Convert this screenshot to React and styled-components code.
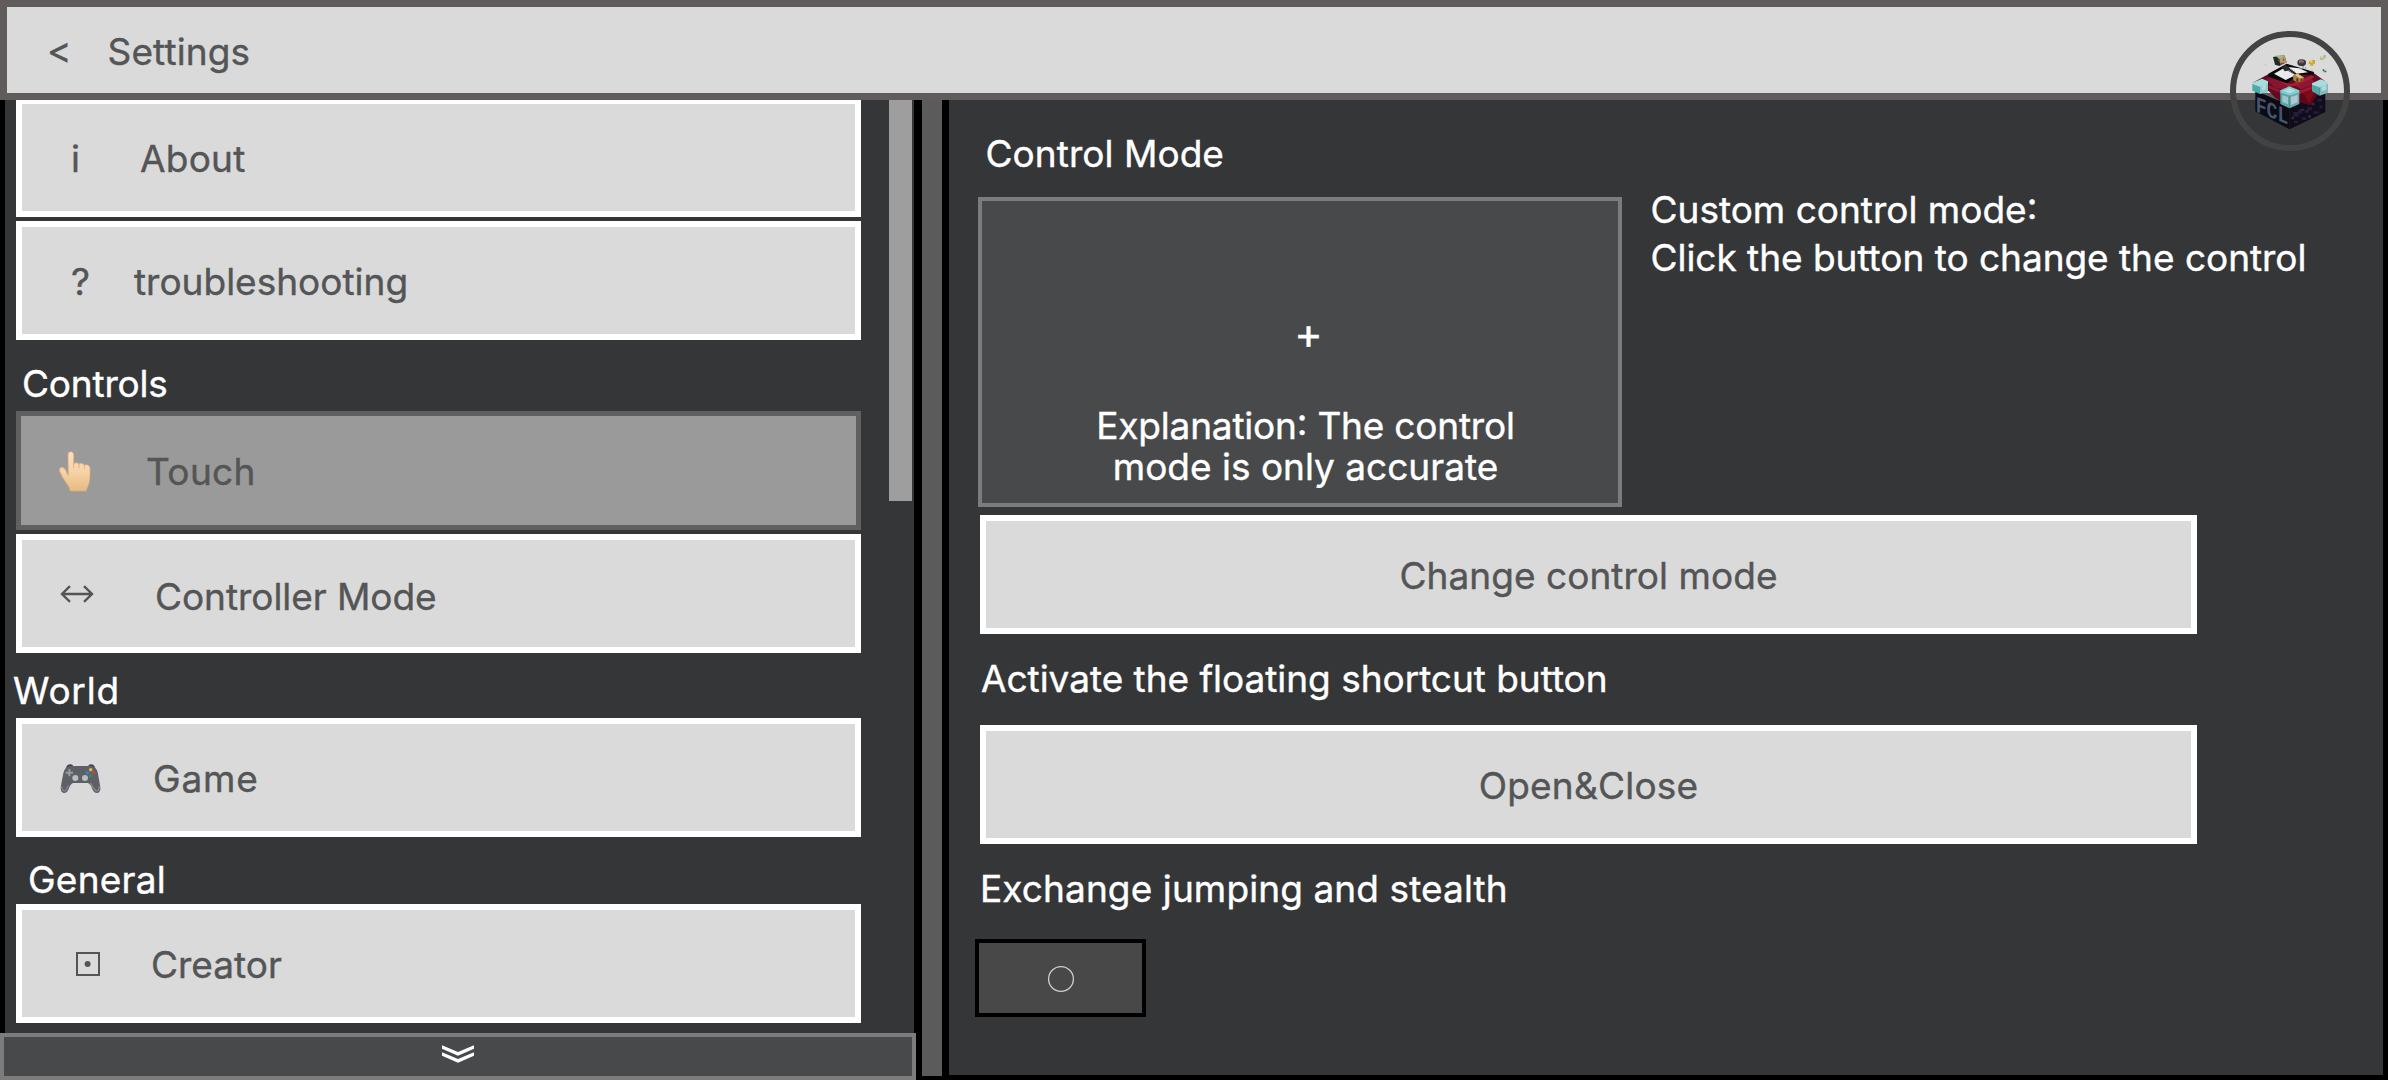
import React from "react";
import styled, { createGlobalStyle } from "styled-components";

const GlobalStyle = createGlobalStyle`
  *, *::before, *::after { box-sizing: border-box; }
  html, body { margin: 0; padding: 0; background: #000; }
  body { overflow: hidden; }
  svg { display: block; flex: none; }
`;

const Screen = styled.div`
  position: relative;
  display: flex;
  flex-direction: column;
  width: 2388px;
  height: 1080px;
  overflow: hidden;
  background: #000;
  color: #fff;
  font-family: Inter, "Liberation Sans", sans-serif;
  font-size: 37px;
  line-height: 45px;
  white-space: nowrap;
  -webkit-text-stroke: 0.4px currentColor;
`;

const Header = styled.header`
  display: flex;
  align-items: flex-start;
  flex: none;
  height: 100px;
  padding: 22px 0 0 40px;
  border: 7px solid #605c5b;
  background: #dadada;
  color: #545556;
`;

const BackButton = styled.span`
  width: 60.5px;
  margin-top: -2px;
`;

const Title = styled.span`
  letter-spacing: ${(p) => p.$tracking || 0}px;
`;

const Body = styled.main`
  display: flex;
  flex: 1;
  min-height: 0;
`;

const Sidebar = styled.aside`
  display: flex;
  flex-direction: column;
  width: 916px;
`;

const SidebarView = styled.div`
  display: flex;
  justify-content: space-between;
  width: 909px;
  height: 933px;
  margin-left: 5px;
  padding: 0 2px 0 11px;
  overflow: hidden;
  background: #353638;
`;

const NavList = styled.nav`
  width: 845px;
  margin-top: -2px;
`;

const ScrollThumb = styled.div`
  width: 23px;
  height: 401px;
  background: #9e9e9e;
`;

const NavItem = styled.div`
  display: flex;
  align-items: flex-start;
  height: 119px;
  margin-bottom: 4px;
  padding-top: ${(p) => (p.$active ? 33 : 32) + (p.$drop || 0)}px;
  padding-left: ${(p) => (p.$active ? 1 : 0)}px;
  border: ${(p) => (p.$active ? "5px solid #606060" : "6px solid #fff")};
  background: ${(p) => (p.$active ? "#9a9a9a" : "#dadada")};
  color: #545556;
`;

const IconSlot = styled.span`
  flex: none;
  width: ${(p) => p.$width}px;
  height: 45px;
  padding-left: ${(p) => p.$inset}px;
  padding-top: ${(p) => p.$drop || 0}px;
`;

const NavHeading = styled.h2`
  height: 45px;
  margin: ${(p) => p.$before}px 0 ${(p) => p.$after}px ${(p) => p.$indent}px;
  font: inherit;
  letter-spacing: ${(p) => p.$tracking || 0}px;
`;

const MoreBar = styled.div`
  display: flex;
  justify-content: center;
  height: 47px;
  padding-top: 8px;
  border: 4px solid #7c7c7c;
  background: #48494a;
`;

const Divider = styled.div`
  width: 33px;
  height: 976px;
  border: solid #000;
  border-width: 0 7px 0 6px;
  background: #5b5b5b;
`;

const Content = styled.section`
  width: 1434px;
  height: 975px;
  padding: 31px 0 0 29px;
  background: #353638;
`;

const Label = styled.h3`
  height: 45px;
  margin: ${(p) => p.$before || 0}px 0 ${(p) => p.$after}px ${(p) => p.$indent}px;
  font: inherit;
  letter-spacing: ${(p) => p.$tracking || 0}px;
`;

const PreviewRow = styled.div`
  display: flex;
  align-items: flex-start;
  gap: 28.5px;
  height: 320px;
  margin-bottom: 8px;
`;

const Preview = styled.div`
  display: flex;
  flex-direction: column;
  align-items: center;
  justify-content: flex-end;
  width: 644px;
  height: 310px;
  margin-top: 10px;
  padding: 0 0 16px 11px;
  border: 4px solid #7c7c7c;
  background: #48494a;
  line-height: 41px;
`;

const Plus = styled.span`
  margin: 0 0 46px 6px;
  font-size: 43px;
  line-height: 52px;
`;

const Line = styled.span`
  letter-spacing: ${(p) => p.$tracking || 0}px;
`;

const Colon = styled.span`
  vertical-align: 4px;
  line-height: 0;
`;

const Hint = styled.div`
  display: flex;
  flex-direction: column;
  gap: 3px;
`;

const WideButton = styled.div`
  display: flex;
  justify-content: center;
  width: 1217px;
  height: 119px;
  margin-left: 2px;
  padding-top: 32px;
  border: 6px solid #fff;
  background: #dadada;
  color: #545556;
  letter-spacing: ${(p) => p.$tracking || 0}px;
`;

const Toggle = styled.div`
  display: flex;
  align-items: center;
  justify-content: center;
  width: 171px;
  height: 78px;
  margin-left: -3px;
  padding-top: 2px;
  border: 4px solid #000;
  background: #484848;
`;

const Launcher = styled.div`
  position: absolute;
  left: 2230px;
  top: 31px;
  width: 120px;
  height: 120px;
  padding: 11px 0 0 12px;
  border: 6px solid #434343;
  border-radius: 50%;
`;

const TouchIcon = () => (
  <svg width="32" height="41" viewBox="177 334 96 123">
    <defs>
      <linearGradient id="skin" x1="0" y1="0" x2="0" y2="1">
        <stop offset="0" stopColor="#fbdfc0" />
        <stop offset="0.5" stopColor="#f7d3a6" />
        <stop offset="1" stopColor="#e6bb83" />
      </linearGradient>
    </defs>
    <path
      d="M204 346Q204 336 212 336Q221 336 221 346V372Q230 366 237 373Q246 368 253 376Q268 373 270 386Q271 420 266 434L258 454H211Q209 443 201 433Q186 413 179 395Q176 384 185 383Q193 383 198 394L205 408Z"
      fill="url(#skin)"
      stroke="#e0ae77"
      strokeWidth="2"
    />
    <path d="M221 371V385M237 373V386M253 376V388" stroke="#dba975" strokeWidth="2.5" fill="none" />
  </svg>
);

const SwapIcon = () => (
  <svg width="34" height="18" viewBox="0 0 34 18" fill="none" stroke="#545556" strokeWidth="2.4">
    <path d="M2 9H32M10 1.2L2 9L10 16.8M24 1.2L32 9L24 16.8" />
  </svg>
);

const GamepadIcon = () => (
  <svg width="41" height="30" viewBox="180 252 123 90">
    <path d="M198 264Q200 253 211 253Q219 253 220 260ZM264 260Q265 253 273 253Q283 254 286 264Z" fill="#3d4348" />
    <path
      d="M200 262Q208 256 220 258H264Q276 256 284 262Q292 267 295 287L301 322Q302 338 292 339Q282 340 277 327Q271 311 263 309H220Q212 311 206 327Q201 340 191 339Q181 337 182 322L189 284Q192 268 200 262Z"
      fill="#5d6067"
    />
    <path d="M185 319Q186 334 195 333Q201 329 205 316M298 319Q297 334 288 333Q276 320 271 309" fill="none" stroke="#8c8e93" strokeWidth="3.5" />
    <path d="M208 267V289M197 278H219" stroke="#999ba0" strokeWidth="6" />
    <circle cx="226" cy="294" r="9" fill="#bdbdbd" />
    <circle cx="255" cy="294" r="9" fill="#bdbdbd" />
    <circle cx="272" cy="269" r="5.2" fill="#e6b83c" />
    <circle cx="262" cy="278" r="5.2" fill="#3e7ccc" />
    <circle cx="281" cy="278" r="5.2" fill="#c9433b" />
    <circle cx="271" cy="287" r="5.2" fill="#2f9158" />
  </svg>
);

const CreatorIcon = () => (
  <svg width="24" height="24" viewBox="0 0 24 24">
    <rect x="1" y="1" width="22" height="22" fill="none" stroke="#545556" strokeWidth="2" />
    <circle cx="11.6" cy="12" r="3" fill="#545556" />
  </svg>
);

const ChevronsIcon = () => (
  <svg width="32" height="18" viewBox="0 0 96 54" fill="#fff">
    <path d="M0 1L48 21L96 1V11L48 32L0 11Z" />
    <path d="M0 22L48 42L96 22V32L48 53L0 32Z" />
  </svg>
);

const RingIcon = () => (
  <svg width="28" height="28" viewBox="0 0 28 28">
    <circle cx="14" cy="14" r="12.4" fill="none" stroke="#cfcfcf" strokeWidth="1.3" />
  </svg>
);

const TableLogo = () => (
  <svg width="88" height="88" viewBox="0 0 264 264">
    <polygon points="22,128 125,172 125,244 22,190" fill="#0a0b13" />
    <polygon points="125,172 232,125 232,192 125,244" fill="#100c1a" />
    <path
      d="M136 192h14v-7h12v12h-10v9h-16zM178 178h14v8h-8v8h-14v-8h8zM208 152h14v9h-14zM196 190h16v7h-16zM138 218h12v8h-12zM162 208h12v8h-12zM214 172h9v9h-9z"
      fill="#251b3b"
    />
    <path d="M158 182h10v6h-10zM190 164h10v8h-10zM130 206h8v8h-8zM180 202h9v7h-9z" fill="#34244f" />
    <polygon points="14,104 62,78 196,74 240,106 232,126 150,146 125,152 60,128" fill="#5f0d25" />
    <polygon points="52,94 80,84 130,112 108,124 82,120" fill="#86152f" />
    <polygon points="140,112 190,92 206,108 158,124" fill="#8d1731" />
    <polygon points="92,100 130,108 190,82 200,88 142,114 122,116" fill="#a51f31" />
    <polygon points="60,112 99,128 99,160 82,150 60,126" fill="#64091f" />
    <polygon points="62,112 99,126 99,136 62,121" fill="#8b1733" />
    <polygon points="152,130 218,108 216,132 186,172 152,162" fill="#5d0719" />
    <polygon points="166,136 205,122 184,166" fill="#7d0c19" />
    <polygon points="152,128 214,106 214,116 152,139" fill="#9d1734" />

    <polygon points="13,104 42,92 60,100 60,110 36,118 13,110" fill="#a9dede" />
    <polygon points="13,108 36,116 36,138 13,128" fill="#4eaaa8" />
    <polygon points="36,116 60,106 60,132 36,138" fill="#8fc8ca" />
    <polygon points="42,113 54,109 54,124 42,128" fill="#b2dadb" />

    <polygon points="192,106 218,94 240,102 240,110 215,120 192,112" fill="#a9dcdd" />
    <polygon points="192,110 215,118 215,143 192,130" fill="#4ca9a7" />
    <polygon points="215,118 240,108 240,134 215,143" fill="#82b9bd" />
    <polygon points="221,116 235,111 235,125 221,130" fill="#b1d7da" />

    <polygon points="97,127 124,115 154,127 154,134 125,144 97,136" fill="#7fcfcf" />
    <polygon points="107,128 124,121 142,128 125,136" fill="#b4dedf" />
    <polygon points="97,133 125,143 125,181 97,168" fill="#57a9a9" />
    <polygon points="125,143 154,133 154,168 125,181" fill="#6da9b0" />
    <polygon points="103,141 120,147 120,169 103,162" fill="#9cc6ca" />
    <polygon points="129,147 149,140 149,163 129,171" fill="#b0c8ce" />

    <polygon points="61,77 116,47 198,72 196,80 150,80 118,106 61,86" fill="#09090a" />
    <polygon points="78,77 112,58 143,82 113,96" fill="#e9e9eb" />
    <polygon points="120,57 154,61 180,73 146,77" fill="#eeeef0" />
    <path d="M118 66L146 82M125 63L142 74" stroke="#555962" strokeWidth="3" />
    <polygon points="102,58 112,50 124,57 120,68 110,70" fill="#292b34" />
    <polygon points="135,82 147,77 168,88 164,99 146,103 136,96" fill="#a98443" />
    <polygon points="140,80 150,77 166,88 155,91" fill="#e0bf7b" />
    <path d="M145 91h6v10h-6zM158 92h5v7h-5z" fill="#4f3a20" />

    <polygon points="75,27 109,21 116,43 94,54 81,50" fill="#202b21" />
    <polygon points="81,23 110,21 110,28 94,32" fill="#a3b886" />
    <polygon points="91,31 111,27 116,43 98,50" fill="#bd9673" />
    <path d="M91 33h5v7h-5zM105 33h4v5h-4zM97 44h11v4h-11z" fill="#72513c" />

    <ellipse cx="161" cy="44" rx="13" ry="10" fill="#393638" />
    <ellipse cx="160" cy="41" rx="8" ry="5" fill="#77797b" />
    <path d="M157 43h9v4h-9z" fill="#93272e" />
    <path d="M163 54h4v8h-4zM157 60h4v4h-4zM171 58h3v6h-3z" fill="#969a9f" />
    <path d="M184 38h8v-2h9v11h-5v6h-9v-5h-5z" fill="#cba62c" />
    <path d="M186 39h8v5h-8z" fill="#ead15a" />
    <path d="M216 24h10v-3h8v10h-7v5h-11z" fill="#b8bd91" />
    <path d="M218 24h7v5h-7z" fill="#d9dcc1" />
    <path d="M224 64h5v4h6v5h-6v-3h-5z" fill="#45546a" />
    <path d="M52 50h4v4h-4zM47 47h3v3h-3zM190 64h4v4h-4z" fill="#bfc3c3" />

    <g transform="translate(23 190) skewY(22)">
      <text
        x="0"
        y="0"
        fill="#475570"
        fontFamily="Liberation Mono, monospace"
        fontWeight="700"
        fontSize="68"
        textLength="98"
        lengthAdjust="spacingAndGlyphs"
      >
        FCL
      </text>
    </g>
  </svg>
);

export default function App() {
  return (
    <Screen>
      <GlobalStyle />
      <Header>
        <BackButton>&lt;</BackButton>
        <Title $tracking={0.14}>Settings</Title>
      </Header>

      <Body>
        <Sidebar>
          <SidebarView>
            <NavList>
              <NavItem>
                <IconSlot $width={118} $inset={49}>i</IconSlot>
                <Title $tracking={0.25}>About</Title>
              </NavItem>
              <NavItem>
                <IconSlot $width={112} $inset={49}>?</IconSlot>
                <Title>troubleshooting</Title>
              </NavItem>

              <NavHeading $before={21} $after={5} $indent={6} $tracking={-0.2}>Controls</NavHeading>
              <NavItem $active>
                <IconSlot $width={124} $inset={37} $drop={2}><TouchIcon /></IconSlot>
                <Title $tracking={0.35}>Touch</Title>
              </NavItem>
              <NavItem $drop={2}>
                <IconSlot $width={133} $inset={38} $drop={11}><SwapIcon /></IconSlot>
                <Title $tracking={-0.05}>Controller Mode</Title>
              </NavItem>

              <NavHeading $before={15} $after={5} $indent={-3} $tracking={0.8}>World</NavHeading>
              <NavItem>
                <IconSlot $width={131} $inset={38} $drop={8}><GamepadIcon /></IconSlot>
                <Title $tracking={0.8}>Game</Title>
              </NavItem>

              <NavHeading $before={20} $after={2} $indent={12} $tracking={0.25}>General</NavHeading>
              <NavItem>
                <IconSlot $width={129} $inset={54} $drop={10}><CreatorIcon /></IconSlot>
                <Title>Creator</Title>
              </NavItem>
            </NavList>
            <ScrollThumb />
          </SidebarView>
          <MoreBar><ChevronsIcon /></MoreBar>
        </Sidebar>

        <Divider />

        <Content>
          <Label $indent={7.5} $after={11} $tracking={0.05}>Control Mode</Label>
          <PreviewRow>
            <Preview>
              <Plus>+</Plus>
              <Line $tracking={-0.2}>Explanation<Colon>:</Colon> The control</Line>
              <Line>mode is only accurate</Line>
            </Preview>
            <Hint>
              <Line>Custom control mode<Colon>:</Colon></Line>
              <Line $tracking={-0.03}>Click the button to change the control</Line>
            </Hint>
          </PreviewRow>
          <WideButton $tracking={0.05}>Change control mode</WideButton>

          <Label $before={22} $after={24} $indent={3} $tracking={-0.03}>Activate the floating shortcut button</Label>
          <WideButton $tracking={0.22}>Open&amp;Close</WideButton>

          <Label $before={22} $after={28} $indent={2} $tracking={0.1}>Exchange jumping and stealth</Label>
          <Toggle><RingIcon /></Toggle>
        </Content>
      </Body>

      <Launcher><TableLogo /></Launcher>
    </Screen>
  );
}
